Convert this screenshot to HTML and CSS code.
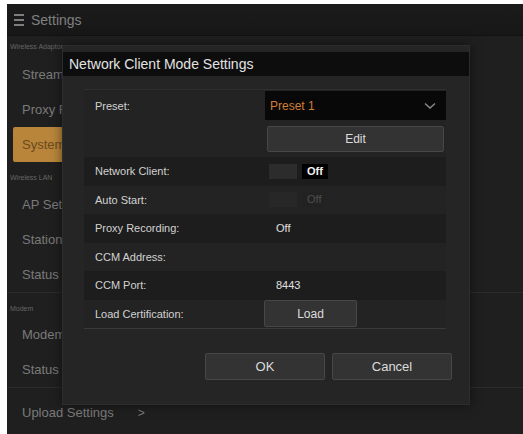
FILE: index.html
```html
<!DOCTYPE html>
<html lang="en">
<head>
  <meta charset="UTF-8">
  <title>Settings - Network Client Mode</title>
  <link rel="stylesheet" href="styles.css">
</head>
<body>

  <div class="screen">
    <div class="topbar">
      <span class="menu-icon"><i></i><i></i><i></i></span>
      <span class="topbar-title">Settings</span>
    </div>

    <div class="side">
      <div class="side-group">Wireless Adaptor</div>
      <div class="side-item">Streaming</div>
      <div class="side-item">Proxy Recording</div>
      <div class="side-item active">System</div>
      <div class="side-group">Wireless LAN</div>
      <div class="side-item">AP Settings</div>
      <div class="side-item">Station Mode</div>
      <div class="side-item">Status</div>
      <div class="side-group sep">Modem</div>
      <div class="side-item">Modem Settings</div>
      <div class="side-item">Status</div>
      <div class="side-item upload sep">Upload Settings <span class="chev">&gt;</span></div>
    </div>

    <!-- modal dialog on top of the settings list -->
    <div class="dialog">
      <div class="dialog-title">Network Client Mode Settings</div>

      <div class="panel">
        <div class="row row-preset">
          <div class="label">Preset:</div>
          <div class="value">
            <div class="select">
              <span>Preset 1</span>
              <svg width="12" height="8" viewBox="0 0 12 8"><path d="M1 1.5 L6 6 L11 1.5" fill="none" stroke="#8a8a8a" stroke-width="1.4"/></svg>
            </div>
          </div>
        </div>
        <div class="row row-edit">
          <div class="label"></div>
          <div class="value"><button class="btn btn-edit">Edit</button></div>
        </div>
        <div class="row dark">
          <div class="label">Network Client:</div>
          <div class="value"><span class="toggle"><i></i><b>Off</b></span></div>
        </div>
        <div class="row">
          <div class="label">Auto Start:</div>
          <div class="value"><span class="toggle disabled"><i></i><b>Off</b></span></div>
        </div>
        <div class="row dark">
          <div class="label">Proxy Recording:</div>
          <div class="value text">Off</div>
        </div>
        <div class="row">
          <div class="label">CCM Address:</div>
          <div class="value text"></div>
        </div>
        <div class="row dark">
          <div class="label">CCM Port:</div>
          <div class="value text">8443</div>
        </div>
        <div class="row">
          <div class="label">Load Certification:</div>
          <div class="value"><button class="btn btn-load">Load</button></div>
        </div>
      </div>

      <div class="dialog-actions">
        <button class="btn btn-action">OK</button>
        <button class="btn btn-action">Cancel</button>
      </div>
    </div>
  </div>

</body>
</html>
```

FILE: styles.css
```css
* {
  box-sizing: border-box;
  margin: 0;
  padding: 0;
}
html, body {
  background: #ffffff;
  font-family: "Liberation Sans", Arial, sans-serif;
}
.screen {
  position: relative;
  margin: 4px 0 0 7px;
  width: 516px;
  height: 430px;
  background: #1f1f1f;
  overflow: hidden;
}
.topbar {
  display: flex;
  align-items: center;
  height: 32px;
  padding-left: 7px;
  background: linear-gradient(#1b1b1b, #171717);
  border-bottom: 1px solid #121212;
}
.menu-icon {
  display: flex;
  flex-direction: column;
  gap: 3px;
  width: 10px;
  margin-right: 7px;
}
.menu-icon i {
  display: block;
  height: 2px;
  background: #7d7d7d;
}
.topbar-title {
  font-size: 14px;
  color: #808080;
}

/* settings list */
.side {
  display: flex;
  flex-direction: column;
  width: 516px;
}
.side-group {
  width: 55px;
  height: 25px;
  padding: 12px 0 0 3px;
  font-size: 7px;
  color: #666;
  white-space: nowrap;
  overflow: hidden;
}
.side-group:first-child {
  height: 21px;
  padding-top: 7px;
}
.side-item {
  display: flex;
  align-items: center;
  width: 55px;
  height: 35px;
  padding-left: 15px;
  font-size: 13px;
  color: #7a7a7a;
  white-space: nowrap;
  overflow: hidden;
}
.side-item.active {
  margin-left: 6px;
  padding-left: 9px;
  width: 49px;
  background: #b8853a;
  color: #6b4a1e;
  border-radius: 2px 0 0 2px;
}
.side-group.sep {
  width: 516px;
}
.sep {
  border-top: 1px solid #2c2c2c;
}
.side-item.upload {
  width: 516px;
  height: 42px;
  padding-top: 8px;
}
.chev {
  margin-left: 24px;
  font-size: 12px;
}

/* dialog */
.dialog {
  position: absolute;
  left: 55px;
  top: 41px;
  width: 408px;
  height: 360px;
  background: #252525;
  border: 1px solid #2d2d2d;
  box-shadow: 0 0 10px rgba(0, 0, 0, 0.5);
}
.dialog-title {
  margin-top: 6px;
  height: 24px;
  line-height: 24px;
  padding-left: 6px;
  background: #0d0d0d;
  color: #e2e2e2;
  font-size: 14px;
}
.panel {
  margin: 13px 0 0 21px;
  width: 362px;
  border-top: 1px solid #2f2f2f;
  border-bottom: 1px solid #3a3a3a;
  background: #232323;
}
.row {
  display: flex;
  align-items: center;
  height: 28.5px;
}
.row.dark {
  background: #1d1d1d;
}
.row-preset {
  height: 31px;
}
.row-edit {
  height: 36px;
}
.label {
  width: 181px;
  padding-left: 11px;
  font-size: 11px;
  color: #d2d2d2;
}
.value {
  flex: 1;
  display: flex;
  align-items: center;
}
.value.text {
  padding-left: 11px;
  font-size: 11px;
  color: #e0e0e0;
}
.select {
  display: flex;
  align-items: center;
  justify-content: space-between;
  width: 181px;
  height: 29px;
  padding: 0 10px 0 5px;
  background: #080808;
  color: #d27e36;
  font-size: 12px;
}
.btn {
  font-family: inherit;
  background: #333333;
  border: 1px solid #474747;
  border-radius: 2px;
  color: #dcdcdc;
  font-size: 12px;
}
.btn-edit {
  margin-left: 2px;
  width: 177px;
  height: 26px;
}
.btn-load {
  margin-left: -1px;
  width: 93px;
  height: 27px;
}
.toggle {
  display: flex;
  align-items: center;
  margin-left: 4px;
  gap: 5px;
}
.toggle i {
  width: 28px;
  height: 15px;
  background: #2c2c2c;
}
.toggle b {
  height: 15px;
  padding: 0 5px;
  line-height: 15px;
  background: #000;
  color: #f2f2f2;
  font-size: 11px;
}
.toggle.disabled i {
  background: #272727;
}
.toggle.disabled b {
  background: #222;
  color: #4e4e4e;
  font-weight: normal;
}
.dialog-actions {
  display: flex;
  gap: 7px;
  margin: 24px 0 0 142px;
}
.btn-action {
  width: 120px;
  height: 27px;
  font-size: 13px;
}
```
